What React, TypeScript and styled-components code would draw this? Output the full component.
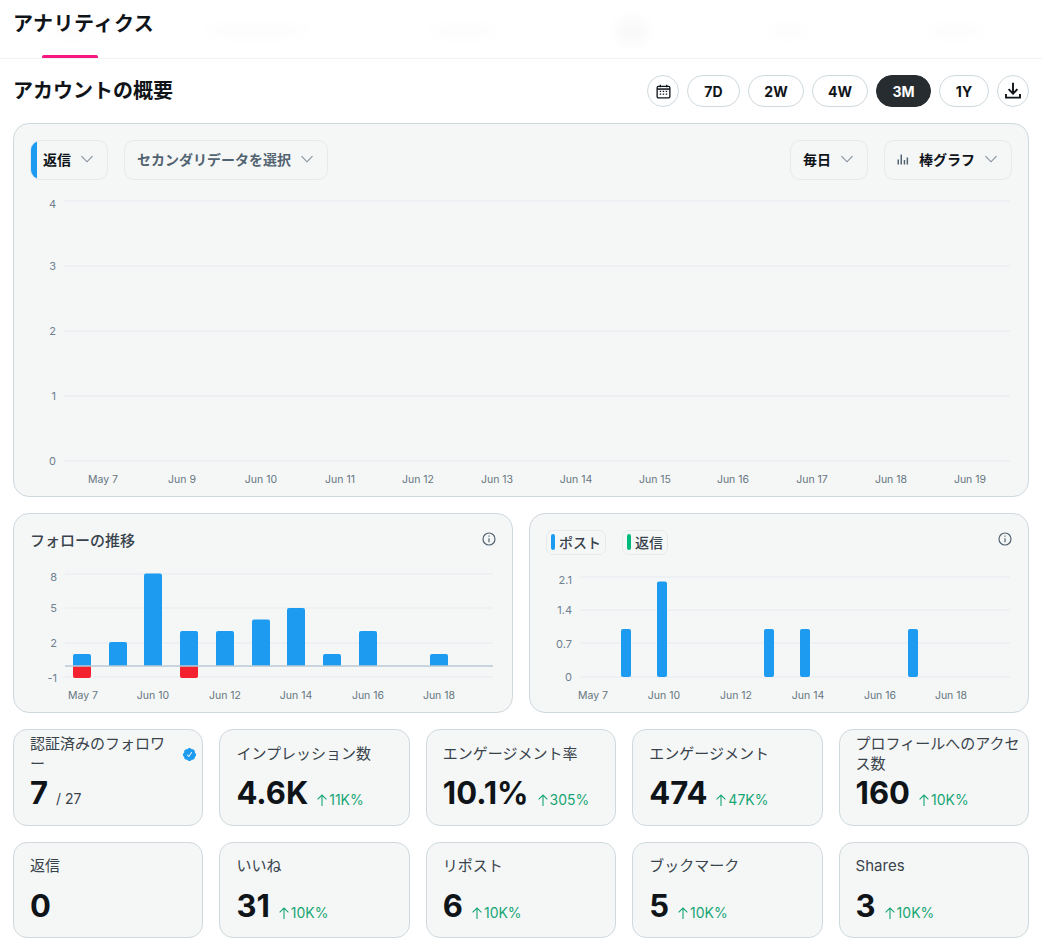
import React from 'react';
import styled, { createGlobalStyle } from 'styled-components';

const GlobalStyle = createGlobalStyle`
  html, body {
    margin: 0;
    padding: 0;
    background: #fff;
    color: #0f1419;
    font-family: Inter, "Noto Sans CJK JP", sans-serif;
  }
  * {
    box-sizing: border-box;
  }
`;

const Page = styled.div`
  width: 1042px;
  height: 947px;
  overflow: hidden;
`;

const TabBar = styled.div`
  position: relative;
  display: flex;
  height: 59px;
  padding-left: 42px;
  border-bottom: 1px solid #eff3f4;
`;

const PageTitle = styled.h1`
  position: absolute;
  left: 13px;
  top: 9px;
  margin: 0;
  font-size: 20px;
  line-height: 30px;
  font-weight: 700;
  letter-spacing: 0.5px;
`;

const GhostTab = styled.div<{ $width: number; $gap: number; $active?: boolean; $blob?: boolean }>`
  position: relative;
  width: ${(p) => p.$width}px;
  margin-left: ${(p) => p.$gap}px;

  &::before {
    content: '';
    position: absolute;
    left: 0;
    right: 0;
    top: ${(p) => (p.$blob ? 18 : 24)}px;
    height: ${(p) => (p.$blob ? 26 : 14)}px;
    border-radius: 50%;
    background: #000;
    opacity: ${(p) => (p.$blob ? 0.022 : 0.012)};
    filter: blur(7px);
  }

  ${(p) =>
    p.$active &&
    `&::after {
      content: '';
      position: absolute;
      left: 0;
      right: 0;
      bottom: 0;
      height: 3px;
      border-radius: 2px 2px 0 0;
      background: #f91880;
    }`}
`;

const Content = styled.div`
  display: flex;
  flex-direction: column;
  padding: 16px 13px 0;
`;

const Toolbar = styled.div`
  display: flex;
  align-items: center;
  justify-content: space-between;
  height: 32px;
`;

const SectionTitle = styled.h2`
  margin: 0;
  padding-bottom: 3px;
  font-size: 20px;
  font-weight: 700;
`;

const RangeGroup = styled.div`
  display: flex;
  gap: 8px;
`;

const RangeButton = styled.button<{ $width: number; $active?: boolean }>`
  display: flex;
  align-items: center;
  justify-content: center;
  width: ${(p) => p.$width}px;
  height: 32px;
  padding: 0;
  border-radius: 16px;
  border: 1px solid ${(p) => (p.$active ? '#272c30' : '#cfd9de')};
  background: ${(p) => (p.$active ? '#272c30' : '#fff')};
  color: ${(p) => (p.$active ? '#fff' : '#0f1419')};
  font-family: inherit;
  font-size: 14px;
  font-weight: 700;
`;

const Panel = styled.section`
  background: #f5f7f7;
  border: 1px solid #cfd9de;
  border-radius: 16px;
`;

const MainPanel = styled(Panel)`
  height: 374px;
  margin-top: 16px;
  padding: 16px 16px 0;
`;

const PanelControls = styled.div`
  display: flex;
  justify-content: space-between;
`;

const ControlGroup = styled.div`
  display: flex;
  gap: 16px;
`;

const Select = styled.div<{ $accent?: boolean; $muted?: boolean }>`
  position: relative;
  display: flex;
  align-items: center;
  gap: 10px;
  height: 40px;
  padding: 0 14px 2px 12px;
  border: 1px solid #e6eaec;
  border-radius: 10px;
  overflow: hidden;
  font-size: 14px;
  font-weight: 700;
  color: ${(p) => (p.$muted ? '#536471' : '#0f1419')};

  ${(p) =>
    p.$accent &&
    `&::before {
      content: '';
      position: absolute;
      left: 0;
      top: 0;
      bottom: 0;
      width: 6px;
      background: #1d9bf0;
    }`}
`;

const ChartSvg = styled.svg`
  display: block;
`;

const MainChart = styled(ChartSvg)`
  margin-top: 13px;
`;

const TwoCharts = styled.div`
  display: grid;
  grid-template-columns: minmax(0, 1fr) minmax(0, 1fr);
  gap: 16px;
  margin-top: 16px;
`;

const ChartPanel = styled(Panel)`
  height: 200px;
  padding: 16px 16px 0;
`;

const ChartHeader = styled.div`
  display: flex;
  justify-content: space-between;
  align-items: flex-start;
  height: 30px;
`;

const ChartTitle = styled.div`
  font-size: 15px;
  line-height: 20px;
  padding-top: 1px;
  font-weight: 500;
  color: #39434b;
`;

const Legend = styled.div`
  display: flex;
  gap: 16px;
`;

const LegendChip = styled.div<{ $color: string }>`
  display: flex;
  align-items: center;
  gap: 4px;
  height: 25px;
  padding: 0 4px 1px;
  border: 1px solid #e6eaec;
  border-radius: 7px;
  font-size: 14px;
  font-weight: 500;
  color: #39434b;

  &::before {
    content: '';
    width: 4px;
    height: 16px;
    border-radius: 2px;
    background: ${(p) => p.$color};
  }
`;

const InfoIcon = styled.svg`
  margin-top: 2px;
  flex: none;
`;

const StatGrid = styled.div`
  display: grid;
  grid-template-columns: repeat(5, minmax(0, 1fr));
  grid-auto-rows: 96.5px;
  gap: 16px;
  margin-top: 16px;
`;

const StatCard = styled(Panel)`
  display: flex;
  flex-direction: column;
  padding: 4px 5px 0 16px;
  border-radius: 14px;
`;

const StatHead = styled.div`
  display: flex;
  align-items: center;
  gap: 8px;
  height: 39px;
`;

const StatLabel = styled.div`
  flex: 1;
  font-size: 15px;
  line-height: 20px;
  color: #39434b;
`;

const StatValueRow = styled.div`
  display: flex;
  align-items: baseline;
  gap: 7px;
  height: 40px;
  line-height: 40px;
`;

const StatValue = styled.div`
  font-size: 31px;
  font-weight: 700;
  color: #0f1419;
`;

const Delta = styled.div`
  display: flex;
  align-items: center;
  align-self: center;
  margin-top: 14px;
  font-size: 14px;
  line-height: 20px;
  color: #17a673;
`;

const Total = styled.div`
  margin-left: 1px;
  font-size: 14px;
  color: #39434b;
`;

const Badge = styled.svg`
  flex: none;
  margin-top: 2px;
`;

const Chevron = () => (
  <svg width="12" height="12" viewBox="0 0 12 12" fill="none" stroke="#828f99" strokeWidth="1.1">
    <path d="M.5 3.2 6 8.8l5.5-5.6" />
  </svg>
);

const BarsIcon = () => (
  <svg width="12" height="12" viewBox="0 0 12 12" fill="#536471">
    <rect x="0.5" y="6.5" width="1.5" height="5" />
    <rect x="3.5" y="1.5" width="1.5" height="10" />
    <rect x="6.7" y="7" width="1.5" height="4.5" />
    <rect x="9.6" y="4.5" width="1.5" height="7" />
  </svg>
);

const CalendarIcon = () => (
  <svg width="15" height="15" viewBox="0 0 16 16" fill="none" stroke="#0f1419">
    <rect x="1.2" y="2.6" width="13.6" height="12.2" rx="1.4" strokeWidth="1.4" />
    <path d="M1.2 5.4h13.6" strokeWidth="1.6" />
    <path d="M4.6.8v2.6M11.4.8v2.6" strokeWidth="1.4" />
    <path
      d="M4 7.8h1.5M7.2 7.8h1.5M10.4 7.8h1.5M4 10.8h1.5M7.2 10.8h1.5M10.4 10.8h1.5"
      strokeWidth="1.4"
    />
  </svg>
);

const DownloadIcon = () => (
  <svg width="18" height="18" viewBox="0 0 18 18" fill="none" stroke="#0f1419" strokeWidth="1.9">
    <path d="M9 .8v10.6M4.6 7.2 9 11.6l4.4-4.4" />
    <path d="M2 12v3.6h14V12" />
  </svg>
);

const Info = () => (
  <InfoIcon width="14" height="14" viewBox="0 0 14 14" fill="none" stroke="#536471" strokeWidth="1.2">
    <circle cx="7" cy="7" r="6" />
    <path d="M7 6.2v4M7 3.6v1.2" />
  </InfoIcon>
);

const VerifiedBadge = () => (
  <Badge width="15" height="15" viewBox="0 0 24 24" fill="#1d9bf0">
    <path d="M22.5 12.5c0-1.58-.875-2.95-2.148-3.6.154-.435.238-.905.238-1.4 0-2.21-1.71-3.998-3.818-3.998-.47 0-.92.084-1.336.25C14.818 2.415 13.51 1.5 12 1.5s-2.816.917-3.437 2.25c-.415-.165-.866-.25-1.336-.25-2.11 0-3.818 1.79-3.818 4 0 .494.083.964.237 1.4-1.272.65-2.147 2.018-2.147 3.6 0 1.495.782 2.798 1.942 3.486-.02.17-.032.34-.032.514 0 2.21 1.708 4 3.818 4 .47 0 .92-.086 1.335-.25.62 1.334 1.926 2.25 3.437 2.25 1.512 0 2.818-.916 3.437-2.25.415.163.865.248 1.336.248 2.11 0 3.818-1.79 3.818-4 0-.174-.012-.344-.033-.513 1.158-.687 1.943-1.99 1.943-3.484zm-6.616-3.334l-4.334 6.5c-.145.217-.382.334-.625.334-.143 0-.288-.04-.416-.126l-.115-.094-2.415-2.415c-.293-.293-.293-.768 0-1.06s.768-.294 1.06 0l1.77 1.767 3.825-5.74c.23-.345.696-.436 1.04-.207.346.23.44.696.21 1.04z" />
  </Badge>
);

const UpArrow = () => (
  <svg width="14" height="14" viewBox="0 0 14 14" fill="none" stroke="currentColor" strokeWidth="1.1">
    <path d="M7 13V2M2.6 6.4 7 2l4.4 4.4" />
  </svg>
);

const TICK_FONT = 'Inter, sans-serif';

type Tick = { label: string; pos: number };

// chart coordinates are kept in page pixels, the viewBox moves them into the panel
const XTicks = ({ ticks, y }: { ticks: Tick[]; y: number }) => (
  <g fontFamily={TICK_FONT} fontSize="10.5" fill="#66757f" textAnchor="middle">
    {ticks.map((t) => (
      <text key={t.label} x={t.pos} y={y}>
        {t.label}
      </text>
    ))}
  </g>
);

const YTicks = ({ ticks, x }: { ticks: Tick[]; x: number }) => (
  <g fontFamily={TICK_FONT} fontSize="11" fill="#6f8090" textAnchor="end">
    {ticks.map((t) => (
      <text key={t.label} x={x} y={t.pos + 4}>
        {t.label}
      </text>
    ))}
  </g>
);

const GridLines = ({ ys, x1, x2 }: { ys: number[]; x1: number; x2: number }) => (
  <g stroke="#edf1f3" strokeWidth="2">
    {ys.map((y) => (
      <line key={y} x1={x1} x2={x2} y1={y} y2={y} />
    ))}
  </g>
);

const mainX = ['May 7', 'Jun 9', 'Jun 10', 'Jun 11', 'Jun 12', 'Jun 13', 'Jun 14', 'Jun 15', 'Jun 16', 'Jun 17', 'Jun 18', 'Jun 19'];
const mainXPos = [103, 182, 261, 340, 418, 497, 576, 655, 733, 812, 891, 970];

const mainXTicks = mainX.map((label, i) => ({ label, pos: mainXPos[i] }));
const mainYTicks = [
  { label: '4', pos: 204 },
  { label: '3', pos: 266 },
  { label: '2', pos: 331 },
  { label: '1', pos: 396 },
  { label: '0', pos: 461 },
];

const followX = [
  { label: 'May 7', pos: 83 },
  { label: 'Jun 10', pos: 153 },
  { label: 'Jun 12', pos: 225 },
  { label: 'Jun 14', pos: 296 },
  { label: 'Jun 16', pos: 368 },
  { label: 'Jun 18', pos: 439 },
];
const followY = [
  { label: '8', pos: 577 },
  { label: '5', pos: 608 },
  { label: '2', pos: 643 },
  { label: '-1', pos: 678 },
];
// [center, top of bar]
const followBars = [
  [82, 654],
  [118, 642],
  [153, 573.5],
  [189, 631],
  [225, 631],
  [261, 619.5],
  [296, 608],
  [332, 654],
  [368, 631],
  [439, 654],
];
const unfollowBars = [82, 189];

const postsX = [
  { label: 'May 7', pos: 593 },
  { label: 'Jun 10', pos: 664 },
  { label: 'Jun 12', pos: 736 },
  { label: 'Jun 14', pos: 808 },
  { label: 'Jun 16', pos: 880 },
  { label: 'Jun 18', pos: 951 },
];
const postsY = [
  { label: '2.1', pos: 580 },
  { label: '1.4', pos: 610 },
  { label: '0.7', pos: 644 },
  { label: '0', pos: 677 },
];
const postBars = [
  [626, 629],
  [662, 581.5],
  [769, 629],
  [805, 629],
  [913, 629],
];

const stats = [
  { label: 'インプレッション数', value: '4.6K', delta: '11K%' },
  { label: 'エンゲージメント率', value: '10.1%', delta: '305%' },
  { label: 'エンゲージメント', value: '474', delta: '47K%' },
  { label: 'プロフィールへのアクセス数', value: '160', delta: '10K%' },
  { label: '返信', value: '0' },
  { label: 'いいね', value: '31', delta: '10K%' },
  { label: 'リポスト', value: '6', delta: '10K%' },
  { label: 'ブックマーク', value: '5', delta: '10K%' },
  { label: 'Shares', value: '3', delta: '10K%' },
];

export default function App() {
  return (
    <Page>
      <GlobalStyle />
      <TabBar>
        <GhostTab $width={56} $gap={0} $active />
        <GhostTab $width={115} $gap={101} />
        <GhostTab $width={75} $gap={111} />
        <GhostTab $width={36} $gap={114} $blob />
        <GhostTab $width={45} $gap={115} />
        <GhostTab $width={60} $gap={115} />
        <PageTitle>アナリティクス</PageTitle>
      </TabBar>
      <Content>
        <Toolbar>
          <SectionTitle>アカウントの概要</SectionTitle>
          <RangeGroup>
            <RangeButton $width={32}>
              <CalendarIcon />
            </RangeButton>
            <RangeButton $width={53}>7D</RangeButton>
            <RangeButton $width={56}>2W</RangeButton>
            <RangeButton $width={56}>4W</RangeButton>
            <RangeButton $width={55} $active>
              3M
            </RangeButton>
            <RangeButton $width={50}>1Y</RangeButton>
            <RangeButton $width={32}>
              <DownloadIcon />
            </RangeButton>
          </RangeGroup>
        </Toolbar>

        <MainPanel>
          <PanelControls>
            <ControlGroup>
              <Select $accent>
                返信
                <Chevron />
              </Select>
              <Select $muted>
                セカンダリデータを選択
                <Chevron />
              </Select>
            </ControlGroup>
            <ControlGroup>
              <Select>
                毎日
                <Chevron />
              </Select>
              <Select>
                <BarsIcon />
                棒グラフ
                <Chevron />
              </Select>
            </ControlGroup>
          </PanelControls>
          <MainChart width="982" height="296" viewBox="30 193 982 296">
            <GridLines ys={[201, 266, 331, 396, 461]} x1={64} x2={1010} />
            <YTicks ticks={mainYTicks} x={56} />
            <XTicks ticks={mainXTicks} y={483} />
          </MainChart>
        </MainPanel>

        <TwoCharts>
          <ChartPanel>
            <ChartHeader>
              <ChartTitle>フォローの推移</ChartTitle>
              <Info />
            </ChartHeader>
            <ChartSvg width="466" height="145" viewBox="30 560 466 145">
              <GridLines ys={[574, 608, 643, 677]} x1={65} x2={493} />
              {followBars.map(([cx, top]) => (
                <path
                  key={cx}
                  d={`M${cx - 9} 666V${top + 2}q0-2 2-2h14q2 0 2 2V666z`}
                  fill="#1d9bf0"
                />
              ))}
              {unfollowBars.map((cx) => (
                <path
                  key={cx}
                  d={`M${cx - 9} 666h18V676q0 2-2 2h-14q-2 0-2-2z`}
                  fill="#f4212e"
                />
              ))}
              <line x1={65} x2={493} y1={666} y2={666} stroke="#b9c9d6" strokeWidth="1.4" />
              <YTicks ticks={followY} x={57} />
              <XTicks ticks={followX} y={699} />
            </ChartSvg>
          </ChartPanel>
          <ChartPanel>
            <ChartHeader>
              <Legend>
                <LegendChip $color="#1d9bf0">ポスト</LegendChip>
                <LegendChip $color="#00ba7c">返信</LegendChip>
              </Legend>
              <Info />
            </ChartHeader>
            <ChartSvg width="466" height="145" viewBox="546 560 466 145">
              <GridLines ys={[577, 610, 643, 677]} x1={580} x2={1010} />
              {postBars.map(([cx, top]) => (
                <rect key={cx} x={cx - 5} y={top} width={10} height={677 - top} rx={2} fill="#1d9bf0" />
              ))}
              <YTicks ticks={postsY} x={572} />
              <XTicks ticks={postsX} y={699} />
            </ChartSvg>
          </ChartPanel>
        </TwoCharts>

        <StatGrid>
          <StatCard>
            <StatHead>
              <StatLabel>認証済みのフォロワー</StatLabel>
              <VerifiedBadge />
            </StatHead>
            <StatValueRow>
              <StatValue>7</StatValue>
              <Total>/ 27</Total>
            </StatValueRow>
          </StatCard>
          {stats.map((s) => (
            <StatCard key={s.label}>
              <StatHead>
                <StatLabel>{s.label}</StatLabel>
              </StatHead>
              <StatValueRow>
                <StatValue>{s.value}</StatValue>
                {s.delta && (
                  <Delta>
                    <UpArrow />
                    {s.delta}
                  </Delta>
                )}
              </StatValueRow>
            </StatCard>
          ))}
        </StatGrid>
      </Content>
    </Page>
  );
}
